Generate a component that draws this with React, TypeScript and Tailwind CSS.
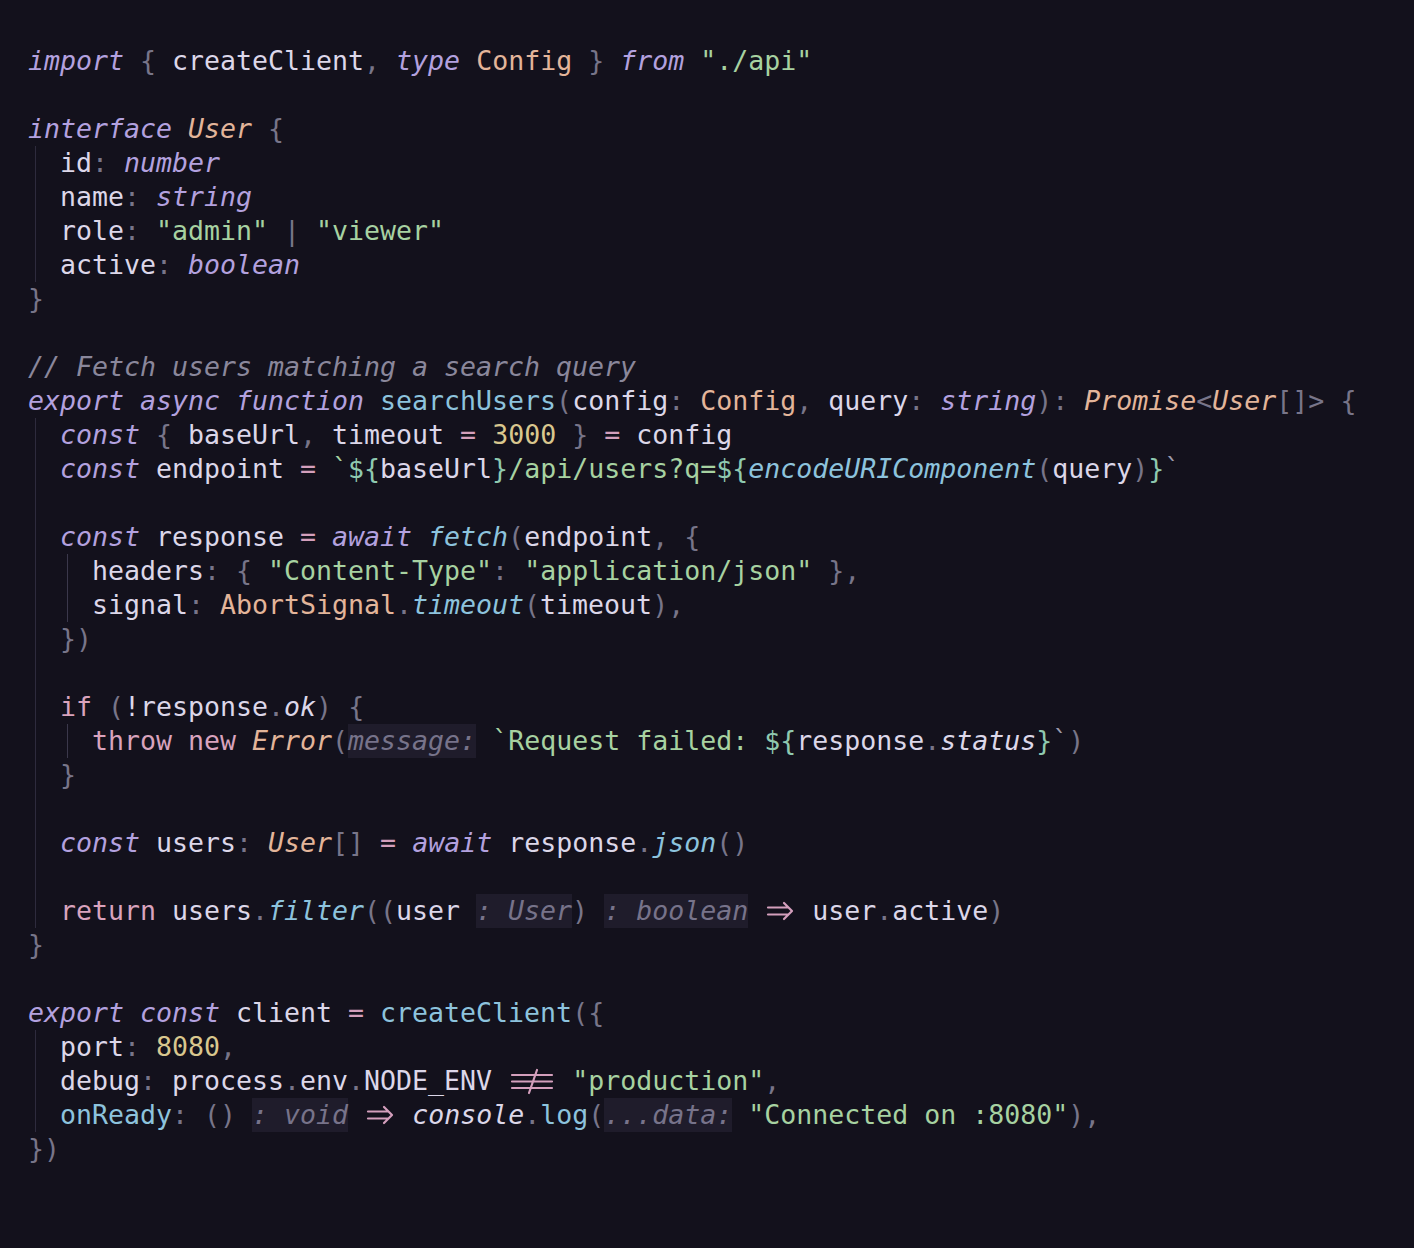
import type { ReactNode } from 'react';

// token colours
const K = 'text-[#b3a1df] italic'; // keywords
const P = 'text-[#787589]'; // punctuation
const T = 'text-[#dcd7e9]'; // plain identifiers
const TY = 'text-[#e3b59a]'; // types
const TYI = 'text-[#e3b59a] italic';
const S = 'text-[#a7d2a1]'; // strings
const C = 'text-[#8a879b] italic'; // comments
const F = 'text-[#8dc3dd]'; // functions
const FI = 'text-[#8dc3dd] italic';
const N = 'text-[#d9c78e]'; // numbers
const O = 'text-[#d49fbc]'; // operators
const CT = 'text-[#d9a3bd]'; // control flow
const TM = 'text-[#8fc9b0]'; // template ${ }
const TI = 'text-[#dcd7e9] italic';
const BT = 'text-[#9c99ab]'; // closing backtick

type Tok = string | [string, string] | { hint: string } | { lig: 'arrow' | 'neq' };

interface Line {
  g?: number; // indent guides
  toks?: Tok[];
}

const hint = (h: string): Tok => ({ hint: h });
const arrow: Tok = { lig: 'arrow' };
const neq: Tok = { lig: 'neq' };

const lines: Line[] = [
  { toks: [['import', K], ' ', ['{', P], ' createClient', [',', P], ' ', ['type', K], ' ', ['Config', TY], ' ', ['}', P], ' ', ['from', K], ' ', ['"./api"', S]] },
  {},
  { toks: [['interface', K], ' ', ['User', TYI], ' ', ['{', P]] },
  { g: 1, toks: ['id', [':', P], ' ', ['number', K]] },
  { g: 1, toks: ['name', [':', P], ' ', ['string', K]] },
  { g: 1, toks: ['role', [':', P], ' ', ['"admin"', S], ' ', ['|', P], ' ', ['"viewer"', S]] },
  { g: 1, toks: ['active', [':', P], ' ', ['boolean', K]] },
  { toks: [['}', P]] },
  {},
  { toks: [['// Fetch users matching a search query', C]] },
  {
    toks: [
      ['export', K], ' ', ['async', K], ' ', ['function', K], ' ', ['searchUsers', F], ['(', P], 'config', [':', P], ' ',
      ['Config', TY], [',', P], ' query', [':', P], ' ', ['string', K], [')', P], [':', P], ' ', ['Promise', TYI], ['<', P],
      ['User', TYI], ['[]>', P], ' ', ['{', P],
    ],
  },
  { g: 1, toks: [['const', K], ' ', ['{', P], ' baseUrl', [',', P], ' timeout ', ['=', O], ' ', ['3000', N], ' ', ['}', P], ' ', ['=', O], ' config'] },
  {
    g: 1,
    toks: [
      ['const', K], ' endpoint ', ['=', O], ' ', ['`', S], ['${', TM], 'baseUrl', ['}', TM], ['/api/users?q=', S], ['${', TM],
      ['encodeURIComponent', FI], ['(', P], 'query', [')', P], ['}', TM], ['`', BT],
    ],
  },
  { g: 1 },
  { g: 1, toks: [['const', K], ' response ', ['=', O], ' ', ['await', K], ' ', ['fetch', FI], ['(', P], 'endpoint', [',', P], ' ', ['{', P]] },
  { g: 2, toks: ['headers', [':', P], ' ', ['{', P], ' ', ['"Content-Type"', S], [':', P], ' ', ['"application/json"', S], ' ', ['}', P], [',', P]] },
  { g: 2, toks: ['signal', [':', P], ' ', ['AbortSignal', TY], ['.', P], ['timeout', FI], ['(', P], 'timeout', [')', P], [',', P]] },
  { g: 1, toks: [['})', P]] },
  { g: 1 },
  { g: 1, toks: [['if', CT], ' ', ['(', P], '!response', ['.', P], ['ok', TI], [')', P], ' ', ['{', P]] },
  {
    g: 2,
    toks: [
      ['throw', CT], ' ', ['new', CT], ' ', ['Error', TYI], ['(', P], hint('message:'), ' ', ['`Request failed: ', S], ['${', TM],
      'response', ['.', P], ['status', TI], ['}', TM], ['`', BT], [')', P],
    ],
  },
  { g: 1, toks: [['}', P]] },
  { g: 1 },
  { g: 1, toks: [['const', K], ' users', [':', P], ' ', ['User', TYI], ['[]', P], ' ', ['=', O], ' ', ['await', K], ' response', ['.', P], ['json', FI], ['()', P]] },
  { g: 1 },
  {
    g: 1,
    toks: [
      ['return', CT], ' users', ['.', P], ['filter', FI], ['((', P], 'user ', hint(': User'), [')', P], ' ', hint(': boolean'), ' ',
      arrow, ' user', ['.', P], 'active', [')', P],
    ],
  },
  { toks: [['}', P]] },
  {},
  { toks: [['export', K], ' ', ['const', K], ' client ', ['=', O], ' ', ['createClient', F], ['({', P]] },
  { g: 1, toks: ['port', [':', P], ' ', ['8080', N], [',', P]] },
  { g: 1, toks: ['debug', [':', P], ' process', ['.', P], 'env', ['.', P], 'NODE_ENV ', neq, ' ', ['"production"', S], [',', P]] },
  {
    g: 1,
    toks: [
      ['onReady', F], [':', P], ' ', ['()', P], ' ', hint(': void'), ' ', arrow, ' ', ['console', TI], ['.', P], ['log', F], ['(', P],
      hint('...data:'), ' ', ['"Connected on :8080"', S], [')', P], [',', P],
    ],
  },
  { toks: [['})', P]] },
];

// ligature glyphs (=> and !==) drawn the way the editor font shows them
function Arrow() {
  return (
    <svg className="w-[32px] h-[34px] shrink-0" viewBox="0 0 32 34" fill="none" stroke="#d49fbc" strokeWidth="2.2" strokeLinecap="round" strokeLinejoin="round">
      <path d="M4 13.5h20M4 20.5h20M20 9l8 8-8 8" />
    </svg>
  );
}

function NotEq() {
  return (
    <svg className="w-[48px] h-[34px] shrink-0" viewBox="0 0 48 34" fill="none" stroke="#d49fbc" strokeWidth="2.2" strokeLinecap="round">
      <path d="M4 11h40M4 17.5h40M4 24h40M29 6l-8 23" />
    </svg>
  );
}

function renderTok(tok: Tok, i: number): ReactNode {
  if (typeof tok === 'string') {
    return <span key={i} className={T}>{tok}</span>;
  }
  if (Array.isArray(tok)) {
    return <span key={i} className={tok[1]}>{tok[0]}</span>;
  }
  if ('hint' in tok) {
    return (
      <span key={i} className="inline-block h-[34px] leading-[34px] bg-[#1f1c2b] text-[#77738a] italic">
        {tok.hint}
      </span>
    );
  }
  return tok.lig === 'arrow' ? <Arrow key={i} /> : <NotEq key={i} />;
}

export default function App() {
  return (
    <div className="min-h-screen bg-[#13111c] pt-[44px] pl-[28px] font-['DejaVu_Sans_Mono',monospace] text-[26.58px]">
      {lines.map((line, idx) => (
        <div key={idx} className="flex h-[34px] items-center whitespace-pre leading-[34px]">
          {Array.from({ length: line.g ?? 0 }).map((_, gi) => (
            <span key={gi} className="w-[32px] self-stretch shrink-0">
              <span
                className={`block h-full ml-[7px] border-l ${gi === 1 ? 'border-[#3b384b]' : 'border-[#2e2b3d]'}`}
              />
            </span>
          ))}
          {line.toks?.map(renderTok)}
        </div>
      ))}
    </div>
  );
}
